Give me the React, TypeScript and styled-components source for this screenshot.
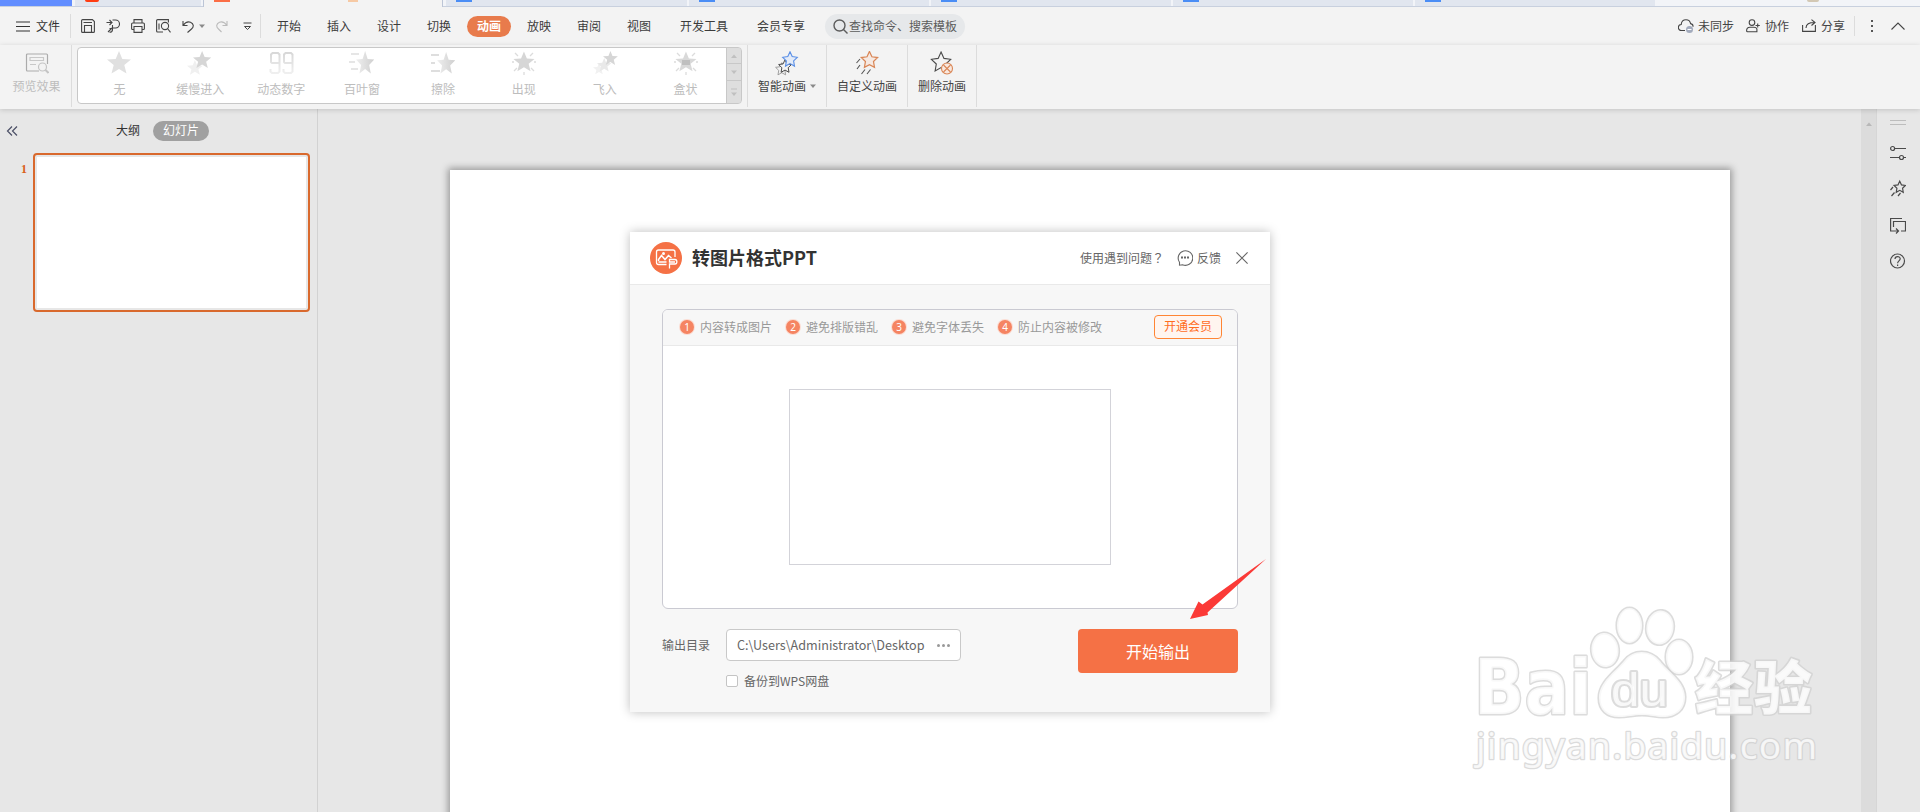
import React from 'react';
import styled, { createGlobalStyle, css } from 'styled-components';

const Global = createGlobalStyle`
  * { box-sizing: border-box; }
  body { margin: 0; background: #e7e7e7; overflow: hidden; }
  svg { display: block; flex: none; }
`;

const Page = styled.div`
  position: relative;
  width: 1920px;
  height: 812px;
  overflow: hidden;
  display: flex;
  flex-direction: column;
  background: #e7e7e7;
  color: #444;
  font: 12px/16px "Noto Sans CJK SC", sans-serif;
  white-space: nowrap;
`;

/* document tabs */
const TabStrip = styled.div`
  display: flex;
  flex: none;
  height: 7px;
  background: #f2f4f8;
  border-bottom: 1px solid #c8d0de;
`;
const HomeTab = styled.div`
  width: 72px;
  height: 6px;
  background: #618dff;
  margin-right: 3px;
`;
const DocTab = styled.div<{ $w: number; $active?: boolean }>`
  width: ${p => p.$w}px;
  height: ${p => (p.$active ? 7 : 6)}px;
  padding-left: 10px;
  margin-right: ${p => (p.$active ? 3 : 2)}px;
  background: ${p => (p.$active ? '#f3f3f3' : '#e1e6ef')};
  ${p => p.$active && css`border: solid #bcc5d6; border-width: 0 1px; display: flex; gap: 118px;`}
`;
const DocIcon = styled.div<{ $c: string; $w?: number; $round?: boolean }>`
  width: ${p => p.$w ?? 16}px;
  height: 2px;
  background: ${p => p.$c};
  border-radius: ${p => (p.$round ? '0 0 6px 6px' : '0')};
`;
const Avatar = styled.div`
  width: 12px;
  height: 2px;
  margin-left: 150px;
  background: #d3c8b4;
  border-radius: 0 0 6px 6px;
`;

/* menu row */
const MenuRow = styled.div`
  display: flex;
  align-items: center;
  flex: none;
  height: 38px;
  padding-left: 16px;
  background: #f3f3f3;
`;
const FileMenu = styled.div`
  display: flex;
  align-items: center;
  gap: 6px;
  width: 54px;
  color: #333;
`;
const Divider = styled.div<{ $h: number }>`
  flex: none;
  width: 1px;
  height: ${p => p.$h}px;
  background: #dcdcdc;
`;
const QuickTools = styled.div`
  display: flex;
  align-items: center;
  width: 189px;
  padding-left: 10px;
  color: #454545;
`;
const Slot = styled.div<{ $w: number; $c?: string }>`
  width: ${p => p.$w}px;
  color: ${p => p.$c ?? 'inherit'};
`;
const MenuTabs = styled.nav`
  display: flex;
  padding-left: 3px;
`;
const MenuTab = styled.div<{ $w?: number; $active?: boolean }>`
  display: flex;
  align-items: center;
  justify-content: center;
  width: ${p => p.$w ?? 44}px;
  height: 21px;
  margin: 0 3px;
  border-radius: 11px;
  color: ${p => (p.$active ? '#fff' : '#3c3c3c')};
  background: ${p => (p.$active ? '#e87b4c' : 'transparent')};
  font-weight: ${p => (p.$active ? 700 : 400)};
`;
const Search = styled.div`
  display: flex;
  align-items: center;
  gap: 1px;
  width: 140px;
  height: 25px;
  padding-left: 8px;
  margin-left: 7px;
  border-radius: 13px;
  background: #e6e8ea;
  color: #5c5c5c;
`;
const Account = styled.div`
  display: flex;
  align-items: center;
  margin-left: auto;
  padding-right: 15px;
`;
const AccountItem = styled.div<{ $gap: number; $after: number }>`
  display: flex;
  align-items: center;
  gap: ${p => p.$gap}px;
  margin-right: ${p => p.$after}px;
`;

/* ribbon */
const Ribbon = styled.div`
  position: relative;
  z-index: 1;
  display: flex;
  flex: none;
  height: 64px;
  background: #f3f3f3;
  box-shadow: 0 1px 5px rgba(0, 0, 0, 0.16);
`;
const RibbonButton = styled.div<{ $w: number; $disabled?: boolean }>`
  display: flex;
  flex-direction: column;
  align-items: center;
  width: ${p => p.$w}px;
  padding-top: 6px;
  padding-left: ${p => (p.$disabled ? 2 : 0)}px;
  color: ${p => (p.$disabled ? '#bdbdbd' : '#444')};
`;
const RibbonLabel = styled.div`
  display: flex;
  align-items: center;
  gap: 4px;
  margin-top: 1px;
`;
const Gallery = styled.div`
  display: flex;
  width: 665px;
  height: 57px;
  margin: 2px 5px 0;
  padding-left: 1px;
  border: 1px solid #c8c8c8;
  border-radius: 4px;
  background: #fff;
  overflow: hidden;
`;
const Effect = styled.div`
  display: flex;
  flex-direction: column;
  align-items: center;
  gap: 5px;
  width: 81px;
  padding-top: 3px;
  color: #bdbdbd;
`;
const GalleryScroll = styled.div`
  display: flex;
  flex-direction: column;
  gap: 1px;
  width: 15px;
  margin-left: auto;
  border-left: 1px solid #c8c8c8;
  background: #c8c8c8;
`;
const ScrollStep = styled.div<{ $h: number }>`
  display: flex;
  height: ${p => p.$h}px;
  align-items: center;
  justify-content: center;
  background: #dedede;
  color: #c0c0c0;
`;

/* workspace */
const Workspace = styled.div`
  display: grid;
  grid-template-columns: 318px 1fr 15px 44px;
  flex: 1;
  min-height: 0;
`;
const Outline = styled.aside`
  border-right: 1px solid #d2d2d2;
`;
const OutlineTabs = styled.div`
  display: flex;
  align-items: center;
  height: 20px;
  margin-top: 12px;
  padding-left: 6px;
  color: #333;
`;
const CollapseIcon = styled.div`
  color: #4b4f66;
`;
const OutlineLabel = styled.div`
  margin: -2px 13px 0 98px;
`;
const OutlinePill = styled.div`
  width: 56px;
  height: 20px;
  line-height: 18px;
  border-radius: 10px;
  background: #a0a0a0;
  color: #fff;
  text-align: center;
`;
const ThumbRow = styled.div`
  display: flex;
  margin-top: 12px;
`;
const ThumbNumber = styled.div`
  width: 33px;
  padding: 8px 0 0 21px;
  font: 700 12px/16px "Liberation Serif", serif;
  color: #d9601a;
`;
const Thumb = styled.div`
  width: 277px;
  height: 159px;
  padding: 2px;
  border: 2px solid #d9692d;
  border-radius: 4px;
  background: #e7e7e7;
`;
const ThumbPage = styled.div`
  height: 100%;
  background: #fff;
`;
const Canvas = styled.main`
  overflow: hidden;
  padding: 61px 0 0 132px;
`;
const Slide = styled.div`
  width: 1280px;
  height: 720px;
  background: #fff;
  box-shadow: 0 0 7px 2px rgba(0, 0, 0, 0.34);
`;
const ScrollBar = styled.div`
  display: flex;
  justify-content: center;
  padding-top: 13px;
  background: #dcdcdc;
  color: #b8b8b8;
`;
const SideTools = styled.aside`
  display: flex;
  flex-direction: column;
  align-items: center;
  padding: 11px 1px 0 0;
  gap: 12px;
  border-left: 1px solid #d6d6d6;
  color: #4a4a4a;
`;
const Grip = styled.div`
  width: 16px;
  height: 5px;
  margin-bottom: 4px;
  border: solid #bdbdbd;
  border-width: 1px 0;
`;

/* dialog */
const Dialog = styled.section`
  position: absolute;
  z-index: 2;
  left: 630px;
  top: 232px;
  width: 640px;
  height: 480px;
  background: #f7f7f7;
  box-shadow: 0 0 10px rgba(0, 0, 0, 0.26);
  color: #666;
`;
const DialogHeader = styled.header`
  display: flex;
  align-items: center;
  height: 53px;
  padding: 0 22px 0 20px;
  background: #fff;
  border-bottom: 1px solid #e9e9e9;
`;
const DialogTitle = styled.h1`
  margin: -2px auto 0 10px;
  font-size: 18px;
  line-height: 24px;
  font-weight: 700;
  color: #333;
`;
const HelpText = styled.span`
  margin-right: 13px;
`;
const QuestionMark = styled.span`
  font-family: "Noto Sans CJK TC", sans-serif;
`;
const Feedback = styled.span`
  display: flex;
  align-items: center;
  gap: 4px;
  margin-right: 15px;
`;
const Card = styled.div`
  width: 576px;
  height: 300px;
  margin: 24px 0 0 32px;
  border: 1px solid #cacad2;
  border-radius: 6px;
  background: #fff;
  overflow: hidden;
`;
const Steps = styled.div`
  display: flex;
  align-items: center;
  height: 36px;
  padding: 0 15px 2px 16px;
  background: #f7f7f7;
  border-bottom: 1px solid #e9e9e9;
  color: #999;
`;
const Step = styled.div`
  display: flex;
  align-items: center;
  gap: 6px;
  margin-right: 13px;
`;
const StepDot = styled.span`
  width: 14px;
  height: 14px;
  margin-left: 1px;
  border-radius: 7px;
  background: #f58462;
  box-shadow: 0 0 0 1px #fbdcd2;
  color: #fff;
  font: 10px/14px "Noto Sans", sans-serif;
  text-align: center;
`;
const VipButton = styled.button`
  width: 68px;
  height: 24px;
  margin-left: auto;
  padding: 0 0 2px;
  border: 1px solid #ff8534;
  border-radius: 4px;
  background: #fff5ef;
  color: #ff6d1f;
  font: inherit;
`;
const Preview = styled.div`
  width: 322px;
  height: 176px;
  margin: 43px 0 0 126px;
  border: 1px solid #d3d3d9;
`;
const DialogFooter = styled.footer`
  display: flex;
  align-items: flex-start;
  margin: 20px 32px 0;
`;
const PathLabel = styled.label`
  width: 64px;
  padding-top: 8px;
`;
const PathColumn = styled.div`
  display: flex;
  flex-direction: column;
  gap: 12px;
`;
const PathBox = styled.div`
  display: flex;
  align-items: center;
  justify-content: space-between;
  width: 235px;
  height: 32px;
  padding: 0 10px;
  border: 1px solid #c9c9c9;
  border-radius: 4px;
  background: #fff;
  font: 12.6px/18px "Noto Sans CJK SC", sans-serif;
`;
const BackupOption = styled.label`
  display: flex;
  align-items: center;
  gap: 6px;
`;
const CheckBox = styled.span`
  width: 12px;
  height: 12px;
  border: 1px solid #c4c4c4;
  border-radius: 2px;
  background: #fff;
`;
const ExportButton = styled.button`
  width: 160px;
  height: 44px;
  margin-left: auto;
  padding: 0 0 1px;
  border: 0;
  border-radius: 4px;
  background: #f57145;
  color: #fff;
  font: 16px/24px "Noto Sans CJK SC", sans-serif;
`;
const PointerArrow = styled.svg`
  position: absolute;
  z-index: 3;
  left: 1186px;
  top: 556px;
`;
const Watermark = styled.svg`
  position: absolute;
  z-index: 3;
  left: 1450px;
  top: 590px;
  paint-order: stroke;
`;

type IconProps = { w: number; h: number; children: React.ReactNode; sw?: number };
const Icon = ({ w, h, children, sw = 1.1 }: IconProps) => (
  <svg width={w} height={h} viewBox={`0 0 ${w} ${h}`} fill="none" stroke="currentColor" strokeWidth={sw}>
    {children}
  </svg>
);

const Caret = ({ up, color = 'currentColor' }: { up?: boolean; color?: string }) => (
  <Icon w={6} h={4} sw={0}>
    <path d={up ? 'M0 4L3 .5 6 4z' : 'M0 .5h6L3 4z'} fill={color} />
  </Icon>
);

const STAR = 'M12 0l3.300 8 8.700.6-6.700 5.400 2.200 8.500-7.500-4.600-7.500 4.600 2.200-8.500L0 8.600 8.700 8z';
const OPEN_STAR = 'M8 .8l2.200 4.800 5.100.7-3.700 3.600.9 5.200L8 12.600l-4.500 2.500.9-5.200L.7 6.300l5.100-.7z';

const Rays = () => (
  <path d="M3 2l3 3M21 2l-3 3M0 11h2M22 11h2M2 20l3-3M22 20l-3-3M12 21v3" stroke="#dcdcdc" strokeWidth="1.300" />
);

const effects: { name: string; art: React.ReactNode }[] = [
  { name: '无', art: <path d={STAR} fill="#e0e0e0" /> },
  {
    name: '缓慢进入',
    art: (
      <>
        <path d={STAR} transform="translate(-1 9) scale(.66)" fill="#f0f0f0" />
        <path d={STAR} transform="translate(5 0) scale(.76)" fill="#d6d6d6" />
      </>
    ),
  },
  {
    name: '动态数字',
    art: (
      <path
        d="M10 12H3L2 11V3.500L3.500 2H9l1.500 1.500v17L9 22H3l-1.500-1.500V18M23 12h-7l-1-1V3.500L16.500 2H22l1.500 1.500v17L22 22h-6l-1.500-1.500V18"
        stroke="url(#fade)"
        strokeWidth="2"
      />
    ),
  },
  {
    name: '百叶窗',
    art: (
      <>
        <path d="M1 3h8M-1 11h6M1 18h7" stroke="#e6e6e6" strokeWidth="2" />
        <path d={STAR} transform="translate(6 0) scale(.76 1)" fill="url(#side)" />
      </>
    ),
  },
  {
    name: '擦除',
    art: (
      <>
        <path d="M0 4h8M0 12h4M0 20h9" stroke="#dedede" strokeWidth="2" />
        <path d={STAR} transform="translate(6 1) scale(.76 .96)" fill="url(#side)" />
      </>
    ),
  },
  {
    name: '出现',
    art: (
      <>
        <Rays />
        <path d={STAR} transform="translate(1.400 .5) scale(.88)" fill="#d6d6d6" />
      </>
    ),
  },
  {
    name: '飞入',
    art: (
      <>
        <path d={STAR} transform="translate(0 12) scale(.5)" fill="#f1f1f1" />
        <path d={STAR} transform="translate(4 7) scale(.6)" fill="#e9e9e9" />
        <path d={STAR} transform="translate(10 0) scale(.62)" fill="#d6d6d6" />
      </>
    ),
  },
  {
    name: '盒状',
    art: (
      <>
        <Rays />
        <path d={STAR} transform="translate(1.400 .5) scale(.88)" fill="#d9d9d9" />
        <rect x="8" y="9" width="8" height="5" fill="#bfbfbf" />
      </>
    ),
  },
];

const menus = [
  { t: '开始' }, { t: '插入' }, { t: '设计' }, { t: '切换' }, { t: '动画', active: true },
  { t: '放映' }, { t: '审阅' }, { t: '视图' }, { t: '开发工具', w: 74 }, { t: '会员专享', w: 68 },
];

const steps = ['内容转成图片', '避免排版错乱', '避免字体丢失', '防止内容被修改'];

const Brand = () => (
  <svg width="32" height="32" viewBox="0 0 32 32" fill="none" stroke="#fff" strokeWidth="1.300">
    <circle cx="16" cy="16" r="16" fill="#f57145" stroke="none" />
    <path d="M16.500 22.500H8.500a2 2 0 0 1-2-2V10a2 2 0 0 1 2-2h14.500a2 2 0 0 1 2 2v5" />
    <path d="M8.500 19v-1.500l3-4 3.500 4 3.500-4 3 2.500M8.500 20h8" strokeWidth="1.500" />
    <circle cx="13.500" cy="11.500" r="1.500" fill="#fff" stroke="none" />
    <path d="M19.500 26.500V22H25c2.500 0 2.500-4.500 0-4.500h-5.500v2.500H25" />
  </svg>
);

export default function App() {
  return (
    <Page>
      <Global />
      <TabStrip>
        <HomeTab />
        <DocTab $w={126}><DocIcon $c="#ff3d12" $w={14} $round /></DocTab>
        <DocTab $w={240} $active>
          <DocIcon $c="#fb6e46" />
          <DocIcon $c="#f6c9a4" $w={10} />
        </DocTab>
        {[241, 240, 240, 240, 240].map((w, i) => (
          <DocTab key={i} $w={w}><DocIcon $c="#4a8df5" /></DocTab>
        ))}
        <Avatar />
      </TabStrip>

      <MenuRow>
        <FileMenu>
          <Icon w={14} h={11}><path d="M0 1h14M0 5.500h14M0 10h14" /></Icon>
          文件
        </FileMenu>
        <Divider $h={24} />
        <QuickTools>
          <Slot $w={25}>
            <Icon w={14} h={14}>
              <path d="M.6 1.600a1 1 0 0 1 1-1h9.800l2 2v9.800a1 1 0 0 1-1 1H1.600a1 1 0 0 1-1-1zM3.500 13.400V6.500h7v6.900M2.500 3.500h8.500" />
            </Icon>
          </Slot>
          <Slot $w={25}>
            <Icon w={14} h={14}>
              <path d="M.5 3.500h5M3.500 1l2.500 2.500L3.500 6M6.500 1h3a3.600 3.600 0 0 1 0 8h-4M6.500 6v4.500c0 2-1.500 2.800-3 2.800M3.500 9.500h2L2 13" />
            </Icon>
          </Slot>
          <Slot $w={25}>
            <Icon w={14} h={14}>
              <path d="M3 4V.6h8V4M3 10.500H1.600a1 1 0 0 1-1-1V5a1 1 0 0 1 1-1h10.800a1 1 0 0 1 1 1v4.500a1 1 0 0 1-1 1H11M3 7.500h8v5.900H3z" />
            </Icon>
          </Slot>
          <Slot $w={26}>
            <Icon w={15} h={14}>
              <path d="M7 13H1.600a1 1 0 0 1-1-1V1.600a1 1 0 0 1 1-1h10.800v3M11.500 9.500l3 3.800M3 10.500v-6" />
              <circle cx="9" cy="7" r="3.600" />
            </Icon>
          </Slot>
          <Slot $w={17}>
            <Icon w={12} h={13}><path d="M1 1v4.500h4.500M1 5.500C3.500 2 6.500 1.500 8.500 2.200 12 3.600 12 7 9.500 9L5.500 12.500" /></Icon>
          </Slot>
          <Slot $w={17} $c="#8a8a8a"><Caret /></Slot>
          <Slot $w={27} $c="#bbb">
            <Icon w={12} h={13}><path d="M11 1v4.500H6.500M11 5.500C8.500 2 5.500 1.500 3.500 2.200 0 3.600 0 7 2.500 9l3 3" /></Icon>
          </Slot>
          <Icon w={9} h={9} sw={1}><path d="M.5 1h8M1.500 4.500h6L4.500 7.500z" /></Icon>
        </QuickTools>
        <Divider $h={24} />
        <MenuTabs>
          {menus.map(m => <MenuTab key={m.t} $w={m.w} $active={m.active}>{m.t}</MenuTab>)}
        </MenuTabs>
        <Search>
          <Icon w={15} h={15} sw={1.4}>
            <circle cx="6.500" cy="6.500" r="5.500" />
            <path d="M10.500 10.500l4 4" />
          </Icon>
          查找命令、搜索模板
        </Search>
        <Account>
          <AccountItem $gap={4} $after={12}>
            <Icon w={16} h={14}>
              <path d="M7 11.500H3.500a3 3 0 0 1-.3-6C3.500 2.500 5.500.8 8 .8s4.200 1.700 4.600 3.800c1.800.4 2.600 1.700 2.400 3.200" />
              <circle cx="11.500" cy="10.500" r="3.500" fill="#a2aabc" stroke="none" />
              <path d="M9.500 10.500h4" stroke="#fff" />
            </Icon>
            未同步
          </AccountItem>
          <AccountItem $gap={5} $after={13}>
            <Icon w={14} h={14}>
              <circle cx="6" cy="3.600" r="2.800" />
              <path d="M8.500 12.800H1.600a1 1 0 0 1-1-1C.6 9.500 2 8.200 4 8.200h4c1.500 0 2.500.6 2.900 1.700v2.900H8M13.800 6.500H9.500M11.700 4.400v4.200" />
            </Icon>
            协作
          </AccountItem>
          <AccountItem $gap={5} $after={9}>
            <Icon w={14} h={14}>
              <path d="M.6 6v6.400h12.800V6M4 9c0-4 3-5.500 8.500-5.500M9.500.6l3.500 2.900-3.500 3" />
            </Icon>
            分享
          </AccountItem>
          <Divider $h={20} />
          <AccountItem $gap={0} $after={16}>
            <svg width="20" height="13" viewBox="0 0 20 13" fill="#555">
              <path d="M16 0h2v2h-2zM16 5h2v2h-2zM16 10h2v2h-2z" />
            </svg>
          </AccountItem>
          <Icon w={14} h={8}><path d="M.5 7.500L7 1l6.500 6.500" /></Icon>
        </Account>
      </MenuRow>

      <Ribbon>
        <RibbonButton $w={71} $disabled>
          <svg width="24" height="26" viewBox="0 0 24 26" fill="none" stroke="#ababab" strokeWidth="1.200">
            <path d="M14 20H2.500a1 1 0 0 1-1-1V4a1 1 0 0 1 1-1h19a1 1 0 0 1 1 1v9" />
            <path d="M5 6.500h13.500v3H5zM5 13.500h6" stroke="#c8c8c8" />
            <circle cx="17.500" cy="16" r="4" stroke="#c4c4c4" />
            <path d="M20.500 19l3 3" stroke="#c4c4c4" strokeWidth="2" />
          </svg>
          <RibbonLabel>预览效果</RibbonLabel>
        </RibbonButton>
        <Divider $h={62} />
        <Gallery>
          {effects.map(e => (
            <Effect key={e.name}>
              <svg width="24" height="25" viewBox="0 0 24 25" fill="none" overflow="visible">
                <defs>
                  <linearGradient id="fade" x1="0" y1="0" x2="0" y2="1">
                    <stop offset="0" stopColor="#d8d8d8" />
                    <stop offset="1" stopColor="#efefef" />
                  </linearGradient>
                  <linearGradient id="side">
                    <stop offset="0" stopColor="#efefef" />
                    <stop offset="1" stopColor="#cfcfcf" />
                  </linearGradient>
                </defs>
                {e.art}
              </svg>
              {e.name}
            </Effect>
          ))}
          <GalleryScroll>
            <ScrollStep $h={15}><Caret up /></ScrollStep>
            <ScrollStep $h={16}><Caret /></ScrollStep>
            <ScrollStep $h={22}>
              <Icon w={6} h={8} sw={1}><path d="M0 1h6" /><path d="M0 4.500h6L3 8z" fill="currentColor" stroke="none" /></Icon>
            </ScrollStep>
          </GalleryScroll>
        </Gallery>
        <Divider $h={62} />
        <RibbonButton $w={78}>
          <svg width="24" height="26" viewBox="0 0 24 26" fill="#f3f3f3" strokeWidth="1.100">
            <path d={OPEN_STAR} transform="translate(0 11) scale(.85)" stroke="#999" />
            <path d={OPEN_STAR} transform="translate(3 8) scale(.88)" stroke="#444" />
            <path d={OPEN_STAR} transform="translate(7 0)" stroke="#5a8fe6" fill="#e3ebf8" />
          </svg>
          <RibbonLabel>智能动画<Caret color="#8a8a8a" /></RibbonLabel>
        </RibbonButton>
        <Divider $h={62} />
        <RibbonButton $w={80}>
          <svg width="24" height="26" viewBox="0 0 24 26" fill="none" strokeWidth="1.100">
            <path d={OPEN_STAR} transform="translate(5.500 -.5) scale(1.120)" stroke="#d98656" fill="#f6e9e2" />
            <path d="M5 8l-3.500 4M5 14l-3 4M10 18.500l-3.500 4.500M15.500 18.500L12 23" stroke="#555" />
          </svg>
          <RibbonLabel>自定义动画</RibbonLabel>
        </RibbonButton>
        <Divider $h={62} />
        <RibbonButton $w={68}>
          <svg width="24" height="26" viewBox="0 0 24 26" fill="none" strokeWidth="1.100">
            <path d={OPEN_STAR} transform="translate(.5 0) scale(1.320)" stroke="#4a4a4a" strokeWidth=".85" />
            <circle cx="17" cy="17.500" r="5.500" stroke="#d98656" fill="#f8e8df" />
            <path d="M13.500 14l7 7M20.500 14l-7 7" stroke="#d98656" />
          </svg>
          <RibbonLabel>删除动画</RibbonLabel>
        </RibbonButton>
        <Divider $h={62} />
      </Ribbon>

      <Workspace>
        <Outline>
          <OutlineTabs>
            <CollapseIcon>
              <Icon w={12} h={10} sw={1.2}><path d="M6 .5L1.500 5 6 9.500M11 .5L6.500 5 11 9.500" /></Icon>
            </CollapseIcon>
            <OutlineLabel>大纲</OutlineLabel>
            <OutlinePill>幻灯片</OutlinePill>
          </OutlineTabs>
          <ThumbRow>
            <ThumbNumber>1</ThumbNumber>
            <Thumb><ThumbPage /></Thumb>
          </ThumbRow>
        </Outline>
        <Canvas><Slide /></Canvas>
        <ScrollBar><Caret up /></ScrollBar>
        <SideTools>
          <Grip />
          <Icon w={16} h={24} sw={1.2}>
            <circle cx="2.600" cy="7.500" r="2" /><path d="M4.600 7.500H16M0 16.500h9.500M13.500 16.500H16" /><circle cx="11.500" cy="16.500" r="2" />
          </Icon>
          <Icon w={16} h={24} sw={1.2}>
            <path d={OPEN_STAR} transform="translate(3.500 3.500) scale(.78)" strokeWidth="1.500" />
            <path d="M3 10L.5 13M4.500 15.500l-3 3.500M10.500 16l-2.500 3" />
          </Icon>
          <Icon w={16} h={24} sw={1.2}>
            <path d="M12 5.500H.6V18H8M3.500 14V8.500h12V18H11M6 15.500L8.500 18 6 20.500" />
          </Icon>
          <Icon w={16} h={24} sw={1.2}>
            <circle cx="7.500" cy="12" r="7" /><path d="M5 10c0-3.200 5.200-3.200 5.200-.2 0 2-2.600 2.200-2.600 4.400M7.600 15.500V17" />
          </Icon>
        </SideTools>
      </Workspace>

      <Dialog>
        <DialogHeader>
          <Brand />
          <DialogTitle>转图片格式PPT</DialogTitle>
          <HelpText>使用遇到问题<QuestionMark>？</QuestionMark></HelpText>
          <Feedback>
            <Icon w={16} h={16}>
              <path d="M2.500 15.200v-3A7.300 7.300 0 1 1 5.500 14.700z" />
              <path d="M4 7.500h2M7 7.500h2M10 7.500h2" strokeWidth="1.800" />
            </Icon>
            反馈
          </Feedback>
          <Icon w={12} h={12}><path d="M.4.400l11.200 11.200M11.600.400L.4 11.600" /></Icon>
        </DialogHeader>
        <Card>
          <Steps>
            {steps.map((s, i) => (
              <Step key={s}><StepDot>{i + 1}</StepDot>{s}</Step>
            ))}
            <VipButton>开通会员</VipButton>
          </Steps>
          <Preview />
        </Card>
        <DialogFooter>
          <PathLabel>输出目录</PathLabel>
          <PathColumn>
            <PathBox>
              C:\Users\Administrator\Desktop
              <svg width="13" height="3" viewBox="0 0 13 3" fill="#999">
                <circle cx="1.500" cy="1.500" r="1.500" /><circle cx="6.500" cy="1.500" r="1.500" /><circle cx="11.500" cy="1.500" r="1.500" />
              </svg>
            </PathBox>
            <BackupOption><CheckBox />备份到WPS网盘</BackupOption>
          </PathColumn>
          <ExportButton>开始输出</ExportButton>
        </DialogFooter>
      </Dialog>

      <PointerArrow width="84" height="66" viewBox="0 0 84 66">
        <path d="M4 63L12.500 45.500 16.500 48.500 80 3 21.500 56.500 22 59z" fill="#fb3a37" />
      </PointerArrow>

      <Watermark width="400" height="200" viewBox="0 0 400 200">
        <g fill="#fff" fillOpacity=".8" stroke="#d0d0d0" strokeOpacity=".75" strokeWidth="3.200" strokeLinejoin="round">
          <text x="24" y="124" fontSize="77" fontWeight="700" fontFamily="DejaVu Sans, sans-serif" textLength="118" lengthAdjust="spacingAndGlyphs">Bai</text>
          <text x="245" y="119" fontSize="58" fontWeight="900" fontFamily="Noto Sans CJK SC, sans-serif" textLength="117">经验</text>
          <ellipse cx="155" cy="60" rx="13.500" ry="17" transform="rotate(-6 155 60)" />
          <ellipse cx="179.500" cy="35.500" rx="12.500" ry="17.500" />
          <ellipse cx="210" cy="37.500" rx="13.500" ry="17" transform="rotate(8 210 37.500)" />
          <ellipse cx="229" cy="67" rx="13" ry="17" />
          <path d="M174 71C183 59 200 59 210 71c7 10 25 20 25 36 0 13-9 20-22 20-8 0-12-2-21-2s-14 2-23 2c-12 0-20-7-20-19 0-16 16-26 25-37z" />
          <text x="161" y="116" fontSize="47" fontFamily="Liberation Sans, sans-serif" textLength="57" lengthAdjust="spacingAndGlyphs" strokeWidth="4">du</text>
          <text x="26" y="169" fontSize="37" fontFamily="Noto Sans, sans-serif" textLength="341" strokeWidth="2.600">jingyan.baidu.com</text>
        </g>
      </Watermark>
    </Page>
  );
}
